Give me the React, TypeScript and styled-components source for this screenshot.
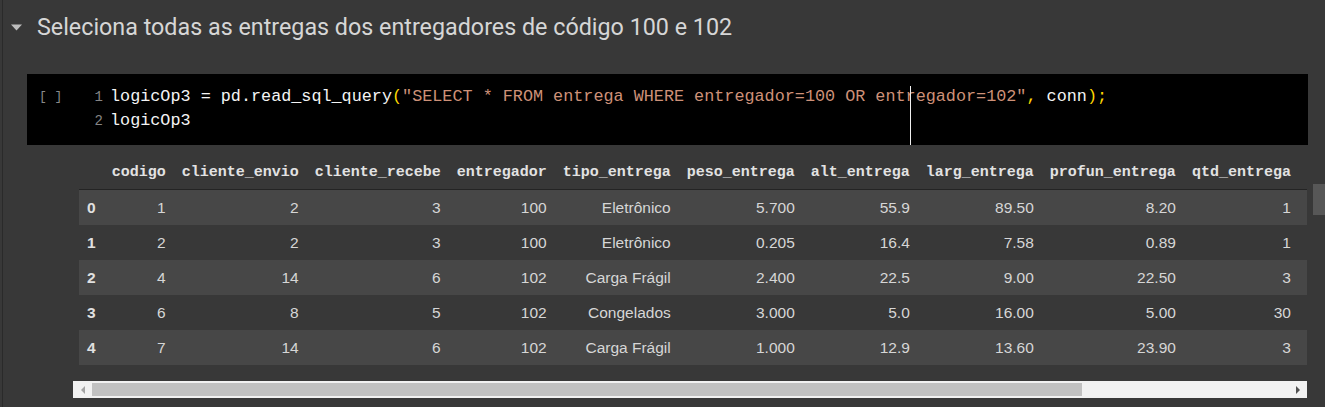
import React from 'react';
import styled, { createGlobalStyle } from 'styled-components';

const GlobalStyle = createGlobalStyle`
  html, body {
    margin: 0;
    padding: 0;
    background: #383838;
    width: 1325px;
    height: 407px;
    overflow: hidden;
  }
`;

const Page = styled.div`
  margin-left: 2px;
  border-left: 1px solid #2a2a2a;
  height: 407px;
  box-sizing: border-box;
`;

const SectionHeader = styled.div`
  display: flex;
  align-items: center;
  padding: 12px 0 0 8px;
  height: 30px;
`;

const Caret = styled.svg`
  width: 11px;
  height: 7px;
  margin-right: 15px;
  flex-shrink: 0;
`;

const SectionTitle = styled.div`
  font-family: Roboto, 'Noto Sans', sans-serif;
  font-size: 23.3px;
  line-height: 30px;
  color: #d6d6d6;
  white-space: nowrap;
`;

const CodeCell = styled.div`
  position: relative;
  display: flex;
  margin: 32px 0 0 24px;
  width: 1281px;
  height: 71px;
  box-sizing: border-box;
  padding: 11px 0 0 12px;
  background: #000;
`;

const Prompt = styled.div`
  width: 50px;
  font-family: 'Liberation Mono', monospace;
  font-size: 13px;
  line-height: 24px;
  color: #8a8a8a;
  white-space: pre;
`;

const Gutter = styled.div`
  width: 14px;
  margin-right: 7px;
  text-align: right;
  font-family: 'Liberation Mono', monospace;
  font-size: 14px;
  line-height: 24px;
  color: #858585;
`;

const CodeLines = styled.div`
  font-family: 'Liberation Mono', monospace;
  font-size: 16.8px;
  line-height: 24px;
  color: #f4f4f4;
  white-space: pre;
`;

const Tok = styled.span<{ $kind: 'str' | 'punc' }>`
  color: ${p => (p.$kind === 'str' ? '#ce9178' : '#ffd700')};
`;

const Cursor = styled.div`
  position: absolute;
  left: 883px;
  top: 12px;
  bottom: 0;
  width: 1px;
  background: #f0f0f0;
`;

const OutputRow = styled.div`
  display: flex;
  margin: 10px 0 0 70px;
`;

const OutputArea = styled.div`
  width: 1234px;
`;

const TableClip = styled.div`
  overflow: hidden;
  padding-left: 6px;
`;

const Table = styled.table`
  border-collapse: collapse;
  white-space: nowrap;
`;

const HeadCell = styled.th`
  height: 34px;
  padding: 0 8px;
  text-align: right;
  font-family: 'Liberation Mono', monospace;
  font-size: 15px;
  font-weight: bold;
  color: #e2e2e2;
  border-bottom: 1px solid #242424;
  &:last-child {
    padding-right: 18px;
  }
`;

const BodyRow = styled.tr<{ $striped: boolean }>`
  background: ${p => (p.$striped ? '#474747' : '#383838')};
`;

const IndexCell = styled.th`
  height: 35px;
  padding: 0 8px;
  text-align: left;
  font-family: 'Liberation Sans', Arial, sans-serif;
  font-size: 15.5px;
  font-weight: bold;
  color: #e0e0e0;
`;

const ValueCell = styled.td`
  height: 35px;
  padding: 0 8px;
  text-align: right;
  font-family: 'Liberation Sans', Arial, sans-serif;
  font-size: 15.5px;
  color: #d6d6d6;
  &:last-child {
    padding-right: 18px;
  }
`;

const HScroll = styled.div`
  display: flex;
  align-items: center;
  margin-top: 16px;
  height: 17px;
  box-sizing: border-box;
  padding: 2px 0;
  background: #f1f1f1;
`;

const ScrollArrow = styled.div<{ $dir: 'left' | 'right' }>`
  width: 0;
  height: 0;
  border-top: 4px solid transparent;
  border-bottom: 4px solid transparent;
  ${p =>
    p.$dir === 'left'
      ? 'border-right: 4px solid #a3a3a3; margin: 0 7px 0 8px;'
      : 'border-left: 4px solid #505050; margin: 0 7px 0 auto;'}
`;

const HThumb = styled.div`
  width: 990px;
  height: 100%;
  background: #c1c1c1;
`;

const VScroll = styled.div`
  width: 12px;
  margin-left: 6px;
  padding-top: 29px;
`;

const VThumb = styled.div`
  height: 31px;
  background: #575757;
`;

const COLUMNS = [
  'codigo',
  'cliente_envio',
  'cliente_recebe',
  'entregador',
  'tipo_entrega',
  'peso_entrega',
  'alt_entrega',
  'larg_entrega',
  'profun_entrega',
  'qtd_entrega',
];

const ROWS = [
  ['1', '2', '3', '100', 'Eletrônico', '5.700', '55.9', '89.50', '8.20', '1'],
  ['2', '2', '3', '100', 'Eletrônico', '0.205', '16.4', '7.58', '0.89', '1'],
  ['4', '14', '6', '102', 'Carga Frágil', '2.400', '22.5', '9.00', '22.50', '3'],
  ['6', '8', '5', '102', 'Congelados', '3.000', '5.0', '16.00', '5.00', '30'],
  ['7', '14', '6', '102', 'Carga Frágil', '1.000', '12.9', '13.60', '23.90', '3'],
];

export default function App() {
  return (
    <>
      <GlobalStyle />
      <Page>
        <SectionHeader>
          <Caret viewBox="0 0 11 7">
            <path d="M0 0.5 L11 0.5 L5.5 6.5 Z" fill="#bdbdbd" />
          </Caret>
          <SectionTitle>Seleciona todas as entregas dos entregadores de código 100 e 102</SectionTitle>
        </SectionHeader>

        <CodeCell>
          <Prompt>[ ]</Prompt>
          <Gutter>
            <div>1</div>
            <div>2</div>
          </Gutter>
          <CodeLines>
            <div>
              logicOp3 = pd.read_sql_query<Tok $kind="punc">(</Tok>
              <Tok $kind="str">"SELECT * FROM entrega WHERE entregador=100 OR entregador=102"</Tok>
              <Tok $kind="punc">,</Tok> conn<Tok $kind="punc">);</Tok>
            </div>
            <div>logicOp3</div>
          </CodeLines>
          <Cursor />
        </CodeCell>

        <OutputRow>
          <OutputArea>
            <TableClip>
              <Table>
                <thead>
                  <tr>
                    <HeadCell />
                    {COLUMNS.map(c => (
                      <HeadCell key={c}>{c}</HeadCell>
                    ))}
                  </tr>
                </thead>
                <tbody>
                  {ROWS.map((row, i) => (
                    <BodyRow key={i} $striped={i % 2 === 0}>
                      <IndexCell>{i}</IndexCell>
                      {row.map((v, j) => (
                        <ValueCell key={j}>{v}</ValueCell>
                      ))}
                    </BodyRow>
                  ))}
                </tbody>
              </Table>
            </TableClip>
            <HScroll>
              <ScrollArrow $dir="left" />
              <HThumb />
              <ScrollArrow $dir="right" />
            </HScroll>
          </OutputArea>
          <VScroll>
            <VThumb />
          </VScroll>
        </OutputRow>
      </Page>
    </>
  );
}
